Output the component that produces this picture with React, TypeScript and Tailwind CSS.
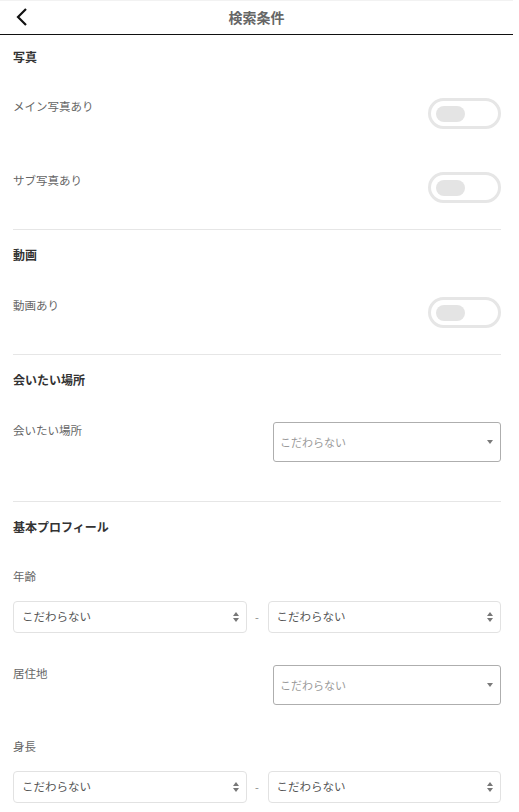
import React from "react";

const font = { fontFamily: '"Noto Sans CJK JP", "Noto Sans", sans-serif' };

function Toggle() {
  return (
    <div className="w-[73px] h-[31px] rounded-full border-[3px] border-[#e6e6e6] bg-white flex items-center pl-[5px] shrink-0">
      <div className="w-[29px] h-[16px] rounded-full bg-[#e4e4e4]" />
    </div>
  );
}

function Heading({ children }: { children: React.ReactNode }) {
  return <div className="text-[12px] leading-[16px] font-bold text-[#333]">{children}</div>;
}

function Label({ children }: { children: React.ReactNode }) {
  return <div className="text-[11.5px] leading-[16px] text-[#666]">{children}</div>;
}

function SingleSelect() {
  return (
    <div className="w-[228px] h-[40px] border border-[#aeaeae] rounded-[3px] flex items-center justify-between pl-[6px] pr-[7px] shrink-0">
      <span className="text-[11px] text-[#9a9a9a]">こだわらない</span>
      <svg width="6" height="4" viewBox="0 0 6 4"><path d="M0 0 L6 0 L3 4 Z" fill="#7a7a7a" /></svg>
    </div>
  );
}

function RangeSelect() {
  return (
    <div className="flex-1 h-[32px] border border-[#e2e2e2] rounded-[4px] flex items-center justify-between pl-[8px] pr-[7px]">
      <span className="text-[11.5px] text-[#555]">こだわらない</span>
      <svg width="6" height="10" viewBox="0 0 6 10">
        <path d="M0 4 L6 4 L3 0 Z" fill="#777" />
        <path d="M0 6 L6 6 L3 10 Z" fill="#777" />
      </svg>
    </div>
  );
}

function Range() {
  return (
    <div className="flex items-center">
      <RangeSelect />
      <span className="w-[21px] text-center text-[11px] text-[#888]">-</span>
      <RangeSelect />
    </div>
  );
}

function Divider() {
  return <div className="h-px bg-[#e6e6e6]" />;
}

export default function App() {
  return (
    <div className="w-[513px] bg-white" style={font}>
      <div className="h-[35px] border-t border-[#f2f2f2] border-b border-b-[#111] relative flex items-center justify-center">
        <svg className="absolute left-[14px] top-[6px]" width="16" height="20" viewBox="0 0 16 20">
          <path d="M12 2 L4 10 L12 18" fill="none" stroke="#111" strokeWidth="2.2" />
        </svg>
        <span className="text-[14px] font-bold text-[#666]">検索条件</span>
      </div>
      <div className="pl-[13px] pr-[12px]">
        <div className="pt-[14px]">
          <Heading>写真</Heading>
        </div>
        <div className="mt-[33px] flex items-start justify-between">
          <Label>メイン写真あり</Label>
          <Toggle />
        </div>
        <div className="mt-[43px] flex items-start justify-between">
          <Label>サブ写真あり</Label>
          <Toggle />
        </div>
        <div className="mt-[26px]"><Divider /></div>
        <div className="mt-[17px]"><Heading>動画</Heading></div>
        <div className="mt-[34px] flex items-start justify-between">
          <Label>動画あり</Label>
          <Toggle />
        </div>
        <div className="mt-[26px]"><Divider /></div>
        <div className="mt-[17px]"><Heading>会いたい場所</Heading></div>
        <div className="mt-[34px] flex items-start justify-between">
          <Label>会いたい場所</Label>
          <SingleSelect />
        </div>
        <div className="mt-[39px]"><Divider /></div>
        <div className="mt-[17px]"><Heading>基本プロフィール</Heading></div>
        <div className="mt-[33px]"><Label>年齢</Label></div>
        <div className="mt-[17px]"><Range /></div>
        <div className="mt-[32px] flex items-start justify-between">
          <Label>居住地</Label>
          <SingleSelect />
        </div>
        <div className="mt-[33px]"><Label>身長</Label></div>
        <div className="mt-[17px] pb-[20px]"><Range /></div>
      </div>
    </div>
  );
}
